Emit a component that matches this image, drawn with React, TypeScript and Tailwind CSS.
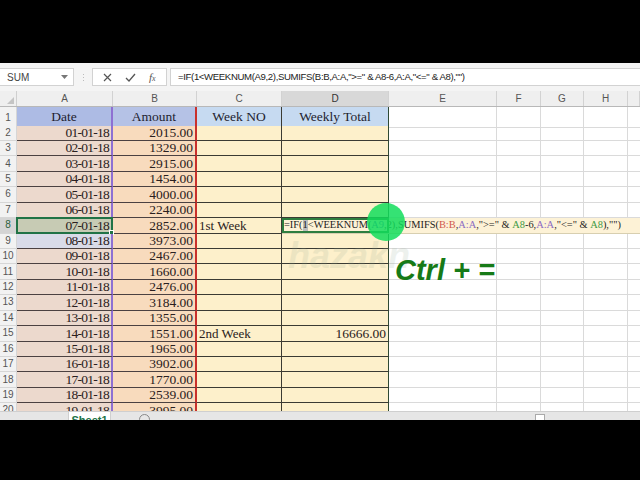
import React from 'react';

const rows: [string, string, string?, string?][] = [
    ['01-01-18', '2015.00'],
    ['02-01-18', '1329.00'],
    ['03-01-18', '2915.00'],
    ['04-01-18', '1454.00'],
    ['05-01-18', '4000.00'],
    ['06-01-18', '2240.00'],
    ['07-01-18', '2852.00', '1st Week'],
    ['08-01-18', '3973.00'],
    ['09-01-18', '2467.00'],
    ['10-01-18', '1660.00'],
    ['11-01-18', '2476.00'],
    ['12-01-18', '3184.00'],
    ['13-01-18', '1355.00'],
    ['14-01-18', '1551.00', '2nd Week', '16666.00'],
    ['15-01-18', '1965.00'],
    ['16-01-18', '3902.00'],
    ['17-01-18', '1770.00'],
    ['18-01-18', '2539.00'],
    ['19-01-18', '3995.00'],
];

const grid = 'grid grid-cols-[17px_96px_84px_85px_107px_108px_44px_43px_44px_1fr]';
const serif = "font-['Liberation_Serif',serif]";
const sans = "font-['Liberation_Sans',Arial,sans-serif]";

function Toolbar() {
    return (
        <div className={`h-[28px] bg-[#f4f4f4] flex items-center ${sans} text-[10px] text-[#444]`}>
            {/* Name box */}
            <div className="w-[74px] h-[18px] bg-white border border-[#d2d2d2] border-l-0 flex items-center justify-between pl-[7px] pr-[5px]">
                <span>SUM</span>
                <svg width="7" height="4" viewBox="0 0 7 4">
                    <path d="M0 0h7L3.5 4z" fill="#777" />
                </svg>
            </div>
            <div className="w-[18px] flex flex-col items-center gap-[2px]">
                <span className="w-[1px] h-[1px] bg-[#bbb]" />
                <span className="w-[1px] h-[1px] bg-[#bbb]" />
                <span className="w-[1px] h-[1px] bg-[#bbb]" />
            </div>
            {/* Cancel / enter / fx */}
            <div className="w-[75px] h-[18px] bg-white border border-[#d2d2d2] flex items-center justify-around px-[4px]">
                <svg width="9" height="9" viewBox="0 0 9 9">
                    <path d="M1 1l7 7M8 1l-7 7" stroke="#555" strokeWidth="1.2" />
                </svg>
                <svg width="11" height="9" viewBox="0 0 11 9">
                    <path d="M1 5l3 3 6-7" stroke="#555" strokeWidth="1.3" fill="none" />
                </svg>
                <span className="italic font-['Liberation_Serif',serif] text-[11px] text-[#555]">
                    f<span className="text-[8px]">x</span>
                </span>
            </div>
            <div className="w-[3px]" />
            {/* Formula input */}
            <div className="flex-1 h-[18px] bg-white border border-[#d2d2d2] border-r-0 flex items-center pl-[7px] text-[9.6px] tracking-[-0.36px] text-[#222] whitespace-nowrap overflow-hidden">
                =IF(1&lt;WEEKNUM(A9,2),SUMIFS(B:B,A:A,"&gt;=" &amp; A8-6,A:A,"&lt;=" &amp; A8),"")
            </div>
        </div>
    );
}

function ColumnHeaders() {
    const cols = ['A', 'B', 'C', 'D', 'E', 'F', 'G', 'H', ''];
    return (
        <div className={`${grid} h-[16px] bg-[#efefef] border-b border-[#b8b8b8] ${sans} text-[10px] text-[#555]`}>
            <div className="border-r border-[#cfcfcf] flex items-end justify-end p-[2px]">
                <svg width="7" height="7" viewBox="0 0 7 7">
                    <path d="M7 0v7H0z" fill="#c4c4c4" />
                </svg>
            </div>
            {cols.map((c) => (
                <div
                    key={c || 'I'}
                    className={`border-r border-[#d2d2d2] flex items-center justify-center ${
                        c === 'D' ? 'bg-[#d8d8d8] text-[#333]' : ''
                    }`}
                >
                    {c}
                </div>
            ))}
        </div>
    );
}

function RowHeader({ n, active }: { n: number; active?: boolean }) {
    return (
        <div
            className={`border-r border-b border-[#d6d6d6] ${sans} text-[10px] flex items-center justify-center ${
                active ? 'bg-[#d4d4d4] text-[#2b5f3b]' : 'bg-[#f2f2f2] text-[#555]'
            }`}
        >
            {n}
        </div>
    );
}

function EmptyCells() {
    return (
        <>
            <div className="border-r border-b border-[#dadada]" />
            <div className="border-r border-b border-[#dadada]" />
            <div className="border-r border-b border-[#dadada]" />
            <div className="border-r border-b border-[#dadada]" />
            <div className="border-b border-[#dadada]" />
        </>
    );
}

function FormulaOverlay() {
    return (
        <div className={`col-span-6 relative bg-[#fdf2d6] border-b border-[#d8cfb0] flex items-center pl-[2px] ${serif} text-[10.4px] text-[#1d1d1d] whitespace-nowrap overflow-hidden`}>
            <div className="absolute left-0 top-0 w-[107px] h-full border-2 border-[#2e7d3f]" />
            <span>=IF(</span>
            <span className="bg-[#bdbdbd]">1</span>
            <span>&lt;WEEKNUM(</span>
            <span className="text-[#3a5fb8]">A9</span>
            <span>,2),SUMIFS(</span>
            <span className="text-[#d0574f]">B:B</span>
            <span>,</span>
            <span className="text-[#8b6cc4]">A:A</span>
            <span>,"&gt;=" &amp;&nbsp;</span>
            <span className="text-[#3f9a45]">A8</span>
            <span>-6,</span>
            <span className="text-[#8b6cc4]">A:A</span>
            <span>,"&lt;=" &amp;&nbsp;</span>
            <span className="text-[#3f9a45]">A8</span>
            <span>),"")</span>
        </div>
    );
}

function DataRow({ n, row }: { n: number; row: [string, string, string?, string?] }) {
    const [date, amount, week, total] = row;
    const isEdit = n === 8;
    const aBg = n === 8 ? 'bg-[#c7cbb4]' : n === 9 ? 'bg-[#d9dbe8]' : 'bg-[#ecd9cd]';
    return (
        <div className={`${grid} h-[15.43px] leading-none`}>
            <RowHeader n={n} active={isEdit} />
            <div
                className={`relative ${aBg} border-b border-b-[#4b4141] border-r-2 border-r-[#8e70d2] flex items-center justify-end pr-[2px] ${serif} text-[13.5px] tracking-[-0.75px] text-[#2a2020]`}
            >
                {date}
                {isEdit && (
                    <div className="absolute -left-[1px] -top-[1px] -right-[2px] -bottom-[1px] border-2 border-[#217346]">
                        <div className="absolute -right-[3px] -bottom-[3px] w-[5px] h-[5px] bg-[#217346] border border-white" />
                    </div>
                )}
            </div>
            <div
                className={`bg-[#f8dbbd] border-b border-b-[#4b4141] border-r-2 border-r-[#c9302c] flex items-center justify-end pr-[2px] ${serif} text-[13.5px] text-[#2a2020]`}
            >
                {amount}
            </div>
            <div
                className={`bg-[#fdf0cb] border-b border-r border-[#3b3b33] flex items-center pl-[2px] ${serif} text-[13px] text-[#2a2020] whitespace-nowrap`}
            >
                {week}
            </div>
            {isEdit ? (
                <FormulaOverlay />
            ) : (
                <>
                    <div
                        className={`bg-[#fdf0cb] border-b border-b-[#3b3b33] border-r border-r-[#2f4a34] flex items-center justify-end pr-[2px] ${serif} text-[13.5px] text-[#2a2020]`}
                    >
                        {total}
                    </div>
                    <EmptyCells />
                </>
            )}
        </div>
    );
}

function HeaderRow() {
    const head = `flex items-center justify-center ${serif} text-[13.5px] text-[#1e1e30]`;
    return (
        <div className={`${grid} h-[18.6px]`}>
            <RowHeader n={1} />
            <div className={`${head} bg-[#adbbe4] border-b border-b-[#4b4141] border-r-2 border-r-[#8e70d2]`}>Date</div>
            <div className={`${head} bg-[#b5c2e6] border-b border-b-[#4b4141] border-r-2 border-r-[#c9302c]`}>Amount</div>
            <div className={`${head} bg-[#c6daf1] border-b border-r border-[#3b3b33]`}>Week NO</div>
            <div className={`${head} bg-[#c6daf1] border-b border-b-[#3b3b33] border-r border-r-[#2f4a34]`}>Weekly Total</div>
            <EmptyCells />
        </div>
    );
}

function TabBar() {
    return (
        <div className={`h-[9px] bg-[#e6e6e6] border-t border-[#cfcfcf] flex items-start overflow-hidden ${sans}`}>
            <div className="w-[68px]" />
            <div className="w-[43px] h-[12px] bg-white border-x border-[#cfcfcf] flex justify-center pt-[3px] text-[11px] font-bold text-[#217346] leading-none">
                Sheet1
            </div>
            <div className="ml-[28px] mt-[2px] w-[11px] h-[11px] rounded-full border border-[#888]" />
            <div className="ml-auto mr-[95px] mt-[2px] w-[10px] h-[10px] border border-[#aaa] bg-white" />
        </div>
    );
}

export default function App() {
    return (
        <div className="relative w-[640px] h-[480px] bg-black overflow-hidden">
            <div className="h-[63px]" />
            <Toolbar />
            <ColumnHeaders />
            <div className="h-[304px] overflow-hidden bg-white">
                <HeaderRow />
                {rows.map((r, i) => (
                    <DataRow key={i} n={i + 2} row={r} />
                ))}
            </div>
            <TabBar />

            {/* watermark */}
            <div className={`absolute left-[288px] top-[238px] ${sans} italic font-bold text-[36px] leading-none text-[#8fa68f] opacity-15 pointer-events-none`}>
                hazakn
            </div>
            {/* click highlight */}
            <div className="absolute left-[367px] top-[203px] w-[38px] h-[38px] rounded-full bg-[#12dd5c] opacity-85" />
            {/* shortcut caption */}
            <div className={`absolute left-[395px] top-[256px] ${sans} italic font-bold text-[29px] leading-none text-[#167a17]`}>
                Ctrl + =
            </div>
        </div>
    );
}
